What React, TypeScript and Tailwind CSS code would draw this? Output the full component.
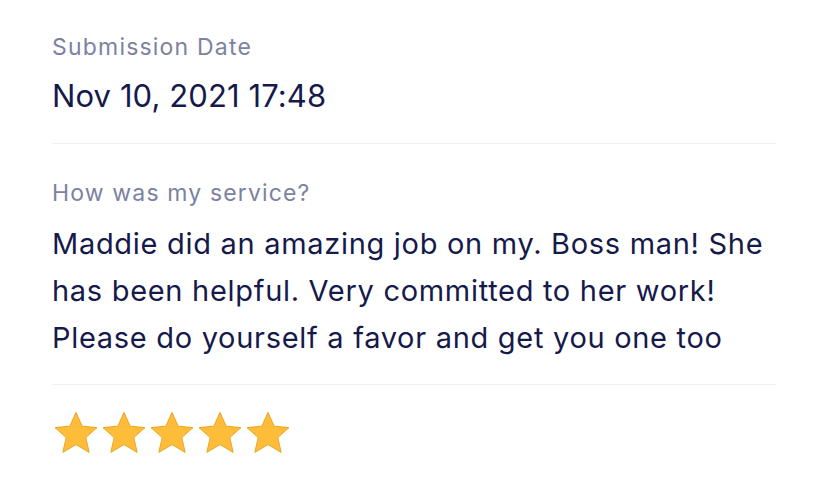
const font = { fontFamily: 'Inter, "Noto Sans", sans-serif' };

function Star() {
  return (
    <svg width="48" height="46" viewBox="0 0 24 23" className="shrink-0">
      <path
        d="M12 1.2l3.1 6.9 7.4.7-5.6 5 1.7 7.4L12 17.3l-6.6 3.9 1.7-7.4-5.6-5 7.4-.7z"
        fill="#fdbd39"
        stroke="#eaa62a"
        strokeWidth="0.5"
        strokeLinejoin="round"
      />
    </svg>
  );
}

export default function App() {
  return (
    <div className="w-[828px] h-[481px] bg-white overflow-hidden" style={font}>
      <div className="px-[52px] pt-[32px]">
        <div className="pb-[27px] border-b border-[#eef0f8]">
          <p className="text-[23px] leading-[30px] tracking-[1.2px] text-[#7c82a2]">Submission Date</p>
          <p className="mt-[14px] text-[31px] leading-[40px] tracking-[0.1px] text-[#151a4a]">Nov 10, 2021 17:48</p>
        </div>
        <div className="pt-[34px] pb-[23px] border-b border-[#eef0f8]">
          <p className="text-[23px] leading-[30px] tracking-[1.15px] text-[#7c82a2]">How was my service?</p>
          <p className="mt-[12px] text-[29px] leading-[47px] tracking-[0.7px] text-[#151a4a]">
            Maddie did an amazing job on my. Boss man! She has been helpful. Very committed to her work! Please do yourself a favor and get you one too
          </p>
        </div>
        <div className="flex pt-[25px]">
          <Star />
          <Star />
          <Star />
          <Star />
          <Star />
        </div>
      </div>
    </div>
  );
}
